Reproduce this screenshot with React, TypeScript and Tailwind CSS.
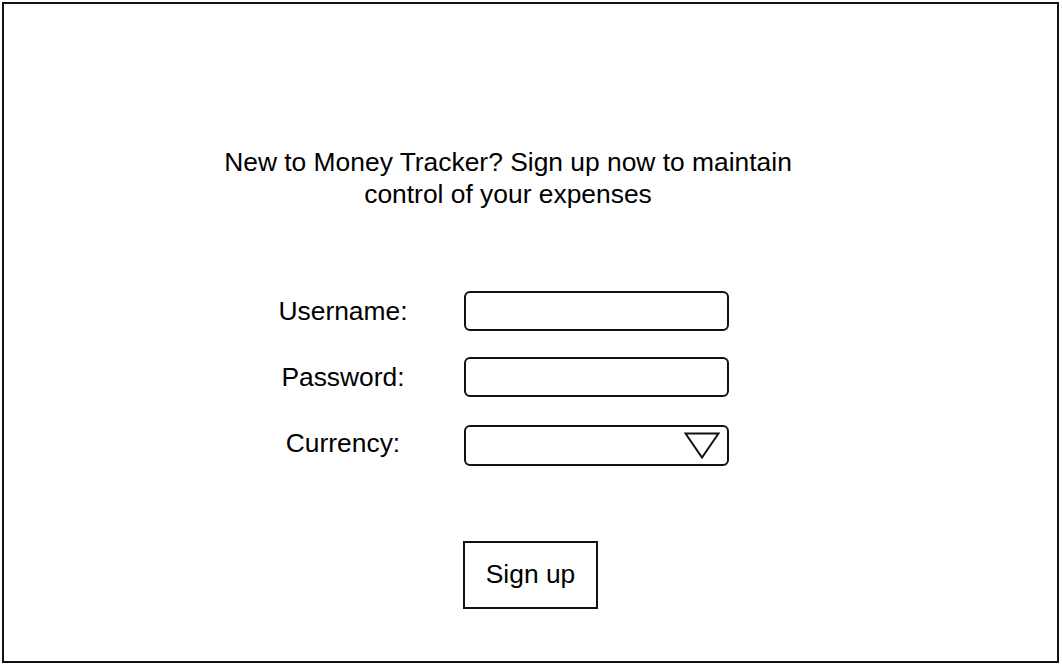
import { useState } from 'react'

const fieldBox = 'w-[265px] h-[40px] rounded-[6px] border-2 border-[#111] bg-white'

export default function App() {
  const [username, setUsername] = useState('')
  const [password, setPassword] = useState('')

  return (
    <div className="w-[1062px] h-[666px] bg-white p-[2px] font-['Liberation_Sans',Arial,sans-serif] text-black">
      <div className="w-[1057px] h-[661px] border-2 border-[#111] flex flex-col">
        {/* Intro */}
        <p className="mt-[142px] ml-[184px] w-[640px] text-center text-[26.4px] leading-[32px]">
          New to Money Tracker? Sign up now to maintain
          <br />
          control of your expenses
        </p>

        {/* Form */}
        <div className="mt-[81px] ml-[259px] flex flex-col">
          <FormRow label="Username:">
            <input
              value={username}
              onChange={(e) => setUsername(e.target.value)}
              className={`${fieldBox} px-2 text-[18px] outline-none`}
            />
          </FormRow>
          <div className="mt-[26px]">
            <FormRow label="Password:">
              <input
                type="password"
                value={password}
                onChange={(e) => setPassword(e.target.value)}
                className={`${fieldBox} px-2 text-[18px] outline-none`}
              />
            </FormRow>
          </div>
          <div className="mt-[28px]">
            <FormRow label="Currency:" labelClass="pb-[6px]">
              <div className={`${fieldBox} h-[41px] flex items-center justify-end pr-[7px]`}>
                <svg width="36" height="27" viewBox="0 0 36 27" fill="none">
                  <path d="M1.5 1.5 H34.5 L18 25.5 Z" stroke="#111" strokeWidth="2" strokeLinejoin="miter" />
                </svg>
              </div>
            </FormRow>
          </div>
        </div>

        <button className="mt-[75px] ml-[459px] w-[135px] h-[68px] border-2 border-[#111] bg-white text-[26.4px]">
          Sign up
        </button>
      </div>
    </div>
  )
}

function FormRow({ label, labelClass = '', children }: { label: string; labelClass?: string; children: React.ReactNode }) {
  return (
    <div className="flex items-center gap-[41px]">
      <span className={`w-[160px] text-center text-[26.4px] leading-[32px] ${labelClass}`}>{label}</span>
      {children}
    </div>
  )
}
